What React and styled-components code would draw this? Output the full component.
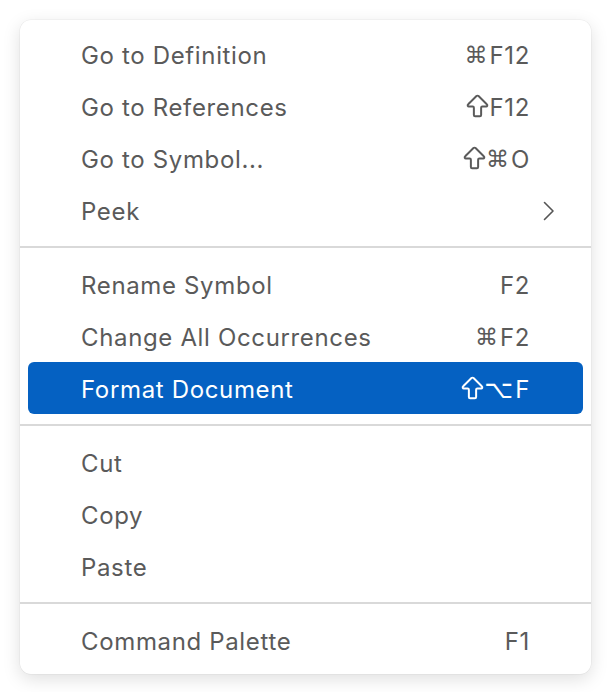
import React from "react";
import styled, { createGlobalStyle } from "styled-components";
import { ArrowBigUp } from "lucide-react";

const Global = createGlobalStyle`
  html, body { margin: 0; padding: 0; background: #ffffff; }
  body { font-family: Inter, "Noto Sans", sans-serif; }
`;

const Page = styled.div`
  padding: 20px 19px 18px 20px;
`;

const Menu = styled.div`
  width: 571px;
  box-sizing: border-box;
  background: #ffffff;
  border-radius: 11px;
  box-shadow: 0 0 0 0.5px rgba(0, 0, 0, 0.06), 0 5px 18px rgba(0, 0, 0, 0.13);
  padding: 8px 0;
  display: flex;
  flex-direction: column;
`;

const Item = styled.div`
  height: 52px;
  margin: 0 8px;
  padding: 2px 53px 0 53px;
  border-radius: 6px;
  display: flex;
  align-items: center;
  justify-content: space-between;
  background: ${(p) => (p.$active ? "#0561c2" : "transparent")};
  color: ${(p) => (p.$active ? "#ffffff" : "#5a5a5a")};
  font-size: 24px;
  letter-spacing: 0.65px;
  box-sizing: border-box;
`;

const Label = styled.span``;

const Shortcut = styled.span`
  display: flex;
  align-items: center;
`;

const Sym = styled.span`
  font-family: "DejaVu Sans", sans-serif;
  font-size: ${(p) => (p.$wide ? "25px" : "23px")};
  letter-spacing: 0;
  margin-right: 2px;
`;

const Shift = styled(ArrowBigUp)`
  margin: -2px -3px 0 -6px;
  flex: none;
`;

const Chevron = styled.svg`
  margin-right: -25px;
  width: 12px;
  height: 20px;
`;

const Separator = styled.div`
  height: 22px;
  display: flex;
  align-items: center;
  &::after {
    content: "";
    flex: 1;
    height: 2px;
    background: #d9d9d9;
  }
`;

const groups = [
  [
    { label: "Go to Definition", keys: [["s", "⌘"], ["t", "F12"]] },
    { label: "Go to References", keys: [["shift"], ["t", "F12"]] },
    { label: "Go to Symbol...", keys: [["shift"], ["s", "⌘"], ["t", "O"]] },
    { label: "Peek", sub: true },
  ],
  [
    { label: "Rename Symbol", keys: [["t", "F2"]] },
    { label: "Change All Occurrences", keys: [["s", "⌘"], ["t", "F2"]] },
    { label: "Format Document", keys: [["shift"], ["s", "⌥", true], ["t", "F"]], active: true },
  ],
  [{ label: "Cut" }, { label: "Copy" }, { label: "Paste" }],
  [{ label: "Command Palette", keys: [["t", "F1"]] }],
];

export default function App() {
  return (
    <Page>
      <Global />
      <Menu>
        {groups.map((g, gi) => (
          <React.Fragment key={gi}>
            {gi > 0 && <Separator />}
            {g.map((it) => (
              <Item key={it.label} $active={it.active}>
                <Label>{it.label}</Label>
                {it.keys && (
                  <Shortcut>
                    {it.keys.map(([k, v, wide], i) =>
                      k === "shift" ? (
                        <Shift key={i} size={29} strokeWidth={1.65} color={it.active ? "#ffffff" : "#5a5a5a"} />
                      ) : k === "s" ? (
                        <Sym key={i} $wide={wide}>{v}</Sym>
                      ) : (
                        <span key={i}>{v}</span>
                      )
                    )}
                  </Shortcut>
                )}
                {it.sub && (
                  <Chevron viewBox="0 0 12 20">
                    <path d="M1.5 1.5 L10 10 L1.5 18.5" fill="none" stroke="#555" strokeWidth="1.6" strokeLinecap="round" strokeLinejoin="round" />
                  </Chevron>
                )}
              </Item>
            ))}
          </React.Fragment>
        ))}
      </Menu>
    </Page>
  );
}
